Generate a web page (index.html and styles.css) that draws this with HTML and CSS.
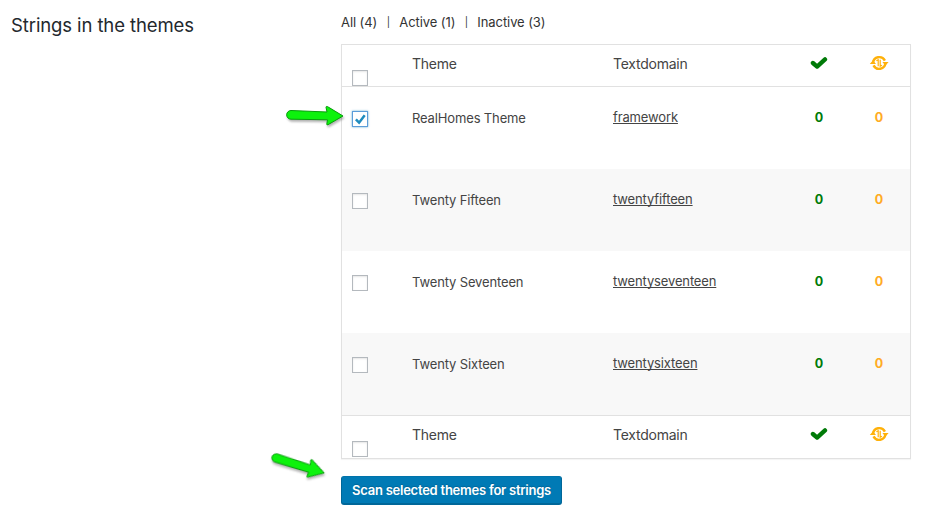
FILE: index.html
```
<!DOCTYPE html>
<html lang="en">
<head>
<meta charset="utf-8">
<title>Strings in the themes</title>
<link rel="stylesheet" href="styles.css">
</head>
<body>
<svg class="defs" aria-hidden="true">
  <symbol id="tick" viewBox="0 0 18 14"><path d="M2.9 7 7.1 10.6 15 3.4" fill="none" stroke="#007a08" stroke-width="4.3" stroke-linejoin="round" stroke-linecap="round"/></symbol>
  <symbol id="sync" viewBox="0 0 20 18">
    <g fill="none" stroke="#ffb10a" stroke-width="2.4"><path d="M4 9A6.3 6.3 0 0 1 15.9 6.6M16.4 9A6.3 6.3 0 0 1 4.5 11.4"/></g>
    <path d="M.8 10 4 6.2 7 10zM19.6 8 16.4 11.8 13.4 8z" fill="#ffb10a"/>
    <path d="M7.4 6.8 9.2 5.8V12.2M13 11.2 11.2 12.2V5.8" fill="none" stroke="#ffb10a" stroke-width="1.2"/>
  </symbol>
  <symbol id="arrow" viewBox="0 0 62 24"><path d="M5 6.5 41 8 40 3.2Q40 2 41.5 2.6L57 12 42 20.7Q40.5 21.4 40.8 19.8L41.5 15.8 5 15.2A4.35 4.35 0 0 1 5 6.5Z" fill="#0df20d" stroke="#079c0b" stroke-width="1"/></symbol>
</svg>
<main class="page">
  <h2 class="title">Strings in the themes</h2>
  <section class="content">
    <nav class="filters"><span>All (4)</span><span class="bar">|</span><span>Active (1)</span><span class="bar">|</span><span>Inactive (3)</span></nav>
    <div class="table">
      <div class="row head"><i class="box"></i><span class="name">Theme</span><span class="domain">Textdomain</span><svg class="tick"><use href="#tick"/></svg><svg class="sync"><use href="#sync"/></svg></div>
      <div class="row"><i class="box checked"><svg viewBox="0 0 14 14"><path d="M2.9 7.4 6.1 10.7 11.7 3.3" fill="none" stroke="#1e8cbe" stroke-width="2.5"/></svg></i><span class="name">RealHomes Theme</span><a class="domain">framework</a><b class="done">0</b><b class="todo">0</b></div>
      <div class="row alt"><i class="box"></i><span class="name">Twenty Fifteen</span><a class="domain">twentyfifteen</a><b class="done">0</b><b class="todo">0</b></div>
      <div class="row"><i class="box"></i><span class="name">Twenty Seventeen</span><a class="domain">twentyseventeen</a><b class="done">0</b><b class="todo">0</b></div>
      <div class="row alt"><i class="box"></i><span class="name">Twenty Sixteen</span><a class="domain">twentysixteen</a><b class="done">0</b><b class="todo">0</b></div>
      <div class="row head foot"><i class="box"></i><span class="name">Theme</span><span class="domain">Textdomain</span><svg class="tick"><use href="#tick"/></svg><svg class="sync"><use href="#sync"/></svg></div>
    </div>
    <button class="scan">Scan selected themes for strings</button>
  </section>
</main>
<svg class="arrow first"><use href="#arrow"/></svg>
<svg class="arrow second"><use href="#arrow"/></svg>
</body>
</html>
```
FILE: styles.css
```
* { box-sizing: border-box; }
body { margin: 0; height: 520px; overflow: hidden; background: #fff; color: #444; font: 13px/18px Inter, "Liberation Sans", sans-serif; position: relative; }
.defs { position: absolute; width: 0; height: 0; }
.page { display: grid; grid-template-columns: 330px 570px; padding: 13px 0 0 11px; }
.title { margin: 0; color: #23282d; font-size: 18.5px; line-height: 25px; font-weight: 400; letter-spacing: -.1px; }
.filters { display: flex; gap: 9px; height: 31px; color: #333; letter-spacing: -.08px; }
.bar { width: 4px; text-align: center; font-size: 10px; line-height: 19px; }
.table { height: 415px; border: 1px solid #e1e1e1; box-shadow: 0 1px 1px rgba(0,0,0,.04); }
.row { display: grid; grid-template-columns: 60px 201px 176px 60px 60px; padding-left: 10px; height: 82px; align-items: start; letter-spacing: -.14px; }
.alt { background: #f8f8f8; }
.head { height: 42px; border-bottom: 1px solid #e1e1e1; font-size: 14px; letter-spacing: -.24px; }
.foot { height: 43px; border-bottom: 0; border-top: 1px solid #e1e1e1; }
.box { width: 16px; height: 16px; margin-top: 24px; border: 1px solid #b4b9be; background: #fff; box-shadow: inset 0 1px 2px rgba(0,0,0,.1); }
.head .box { margin-top: 25px; }
.checked { border-color: #5b9dd9; box-shadow: 0 0 2px rgba(30,140,190,.7); }
.checked svg { display: block; width: 14px; height: 14px; }
.name { margin-top: 22px; justify-self: start; }
.domain { margin-top: 21px; justify-self: start; }
a.domain { text-decoration: underline; text-underline-offset: 1px; text-decoration-thickness: 1px; text-decoration-skip-ink: none; }
.head .name, .head .domain { margin-top: 10px; }
.row b { margin-top: 22px; width: 60px; text-align: center; font-size: 12.5px; font-weight: 700; }
.done { color: #007a08; }
.todo { color: #ffab24; }
.tick { width: 18px; height: 14px; margin: 11px 0 0 21px; }
.sync { width: 20px; height: 18px; margin: 9px 0 0 20px; }
.scan { display: block; width: 221px; height: 29px; margin-top: 17px; padding: 0 0 1px; border: 1px solid #006799; border-color: #0073aa #006799 #006799; border-bottom-width: 2px; border-radius: 3px; background: #007ab5; color: #fff; font: 600 13px/24px Inter, sans-serif; letter-spacing: -.24px; white-space: nowrap; text-shadow: 0 -1px 1px #006799; }
.arrow { position: absolute; width: 62px; height: 24px; overflow: visible; filter: drop-shadow(1px 2px 1px rgba(0,0,0,.3)); }
.first { left: 286px; top: 104px; }
.second { left: 270px; top: 454px; width: 60px; transform: rotate(16deg); }
```
